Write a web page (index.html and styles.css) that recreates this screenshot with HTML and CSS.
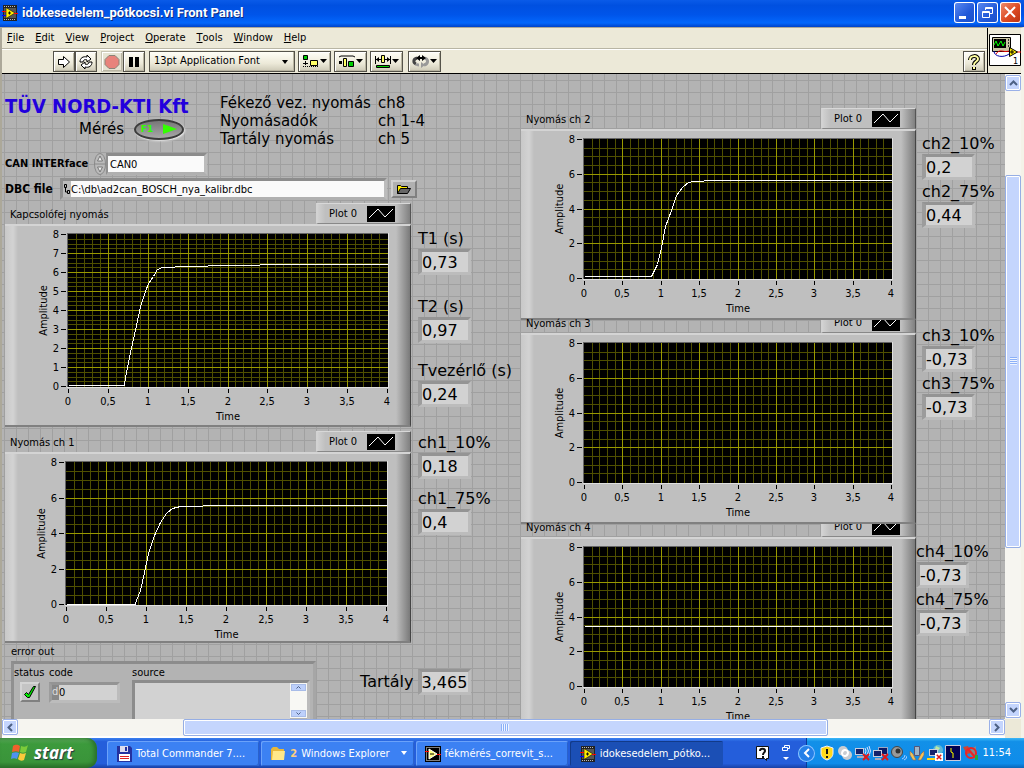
FILE: index.html
```
<!DOCTYPE html>
<html lang="hu">
<head>
  <meta charset="UTF-8">
  <title>idokesedelem_pótkocsi.vi Front Panel</title>
  <link rel="stylesheet" href="styles.css">
</head>
<body>
  <!-- shared icons -->
  <svg class="defs" width="0" height="0">
    <symbol id="vi" viewBox="0 0 16 16">
      <path fill="#222" d="M1 0h14v16H1z"/>
      <path stroke="#bbb" stroke-dasharray="1 1" d="M2 1.500h12M2 14.500h12"/>
      <path fill="#555" d="M2 3h12v10H2z"/>
      <path fill="#ffec00" stroke="#111" stroke-width=".6" d="M4 2.500l9 5.500-9 5.500z"/>
      <path stroke="#111" d="M6 8h3M7.500 6.500v3"/>
      <path stroke="#f00" d="M0 6.500h4M12 8.500h4"/>
      <path stroke="#00f" d="M0 10.500h4"/>
    </symbol>
    <symbol id="down" viewBox="0 0 8 5"><path d="M1 0h6L4 4z"/></symbol>
    <symbol id="wave" viewBox="0 0 28 16">
      <path fill="#000" d="M0 0h28v16H0z"/>
      <path fill="none" stroke="#fff" d="M2 12l9-9 7 8 8-8"/>
    </symbol>
    <symbol id="pc" viewBox="0 0 16 16">
      <path fill="#9aa6c4" d="M5 2h10v8H5z"/><path fill="#0a1a66" d="M6 3h8v6H6z"/>
      <path fill="#c9cfdd" d="M0 5h9v7H0z"/><path fill="#14226b" d="M1 6h7v5H1z"/>
      <path fill="#aab" d="M2 13h6v2H2z"/>
    </symbol>
    <symbol id="cross" viewBox="0 0 8 8"><path stroke="#e01818" stroke-width="2" d="M1 1l6 6M7 1L1 7"/></symbol>
  </svg>

  <header class="titlebar">
    <svg class="icon16"><use href="#vi"/></svg>
    <h1>idokesedelem_pótkocsi.vi Front Panel</h1>
    <button class="winbtn" aria-label="Minimize"><svg width="21" height="21"><path fill="#fff" d="M5 14h7v3H5z"/></svg></button>
    <button class="winbtn" aria-label="Restore"><svg width="21" height="21"><path fill="none" stroke="#fff" d="M8.500 8V5.500h7v6H13M5.500 9.500h7v6h-7zM8 6.500h7M5 10.500h7"/></svg></button>
    <button class="winbtn close" aria-label="Close"><svg width="21" height="21"><path stroke="#fff" stroke-width="2" d="M5 5l10 10M15 5L5 15"/></svg></button>
  </header>

  <main class="window">
    <div class="bars">
      <div class="bars-left">
        <nav class="menu">
          <button><u>F</u>ile</button>
          <button><u>E</u>dit</button>
          <button><u>V</u>iew</button>
          <button><u>P</u>roject</button>
          <button><u>O</u>perate</button>
          <button><u>T</u>ools</button>
          <button><u>W</u>indow</button>
          <button><u>H</u>elp</button>
        </nav>
        <div class="toolbar">
          <div class="group">
            <button class="tool" aria-label="Run"><svg width="18" height="16"><path fill="#fff" stroke="#000" d="M3.500 5.500h5V2.500l6 5.500-6 5.500v-3h-5z"/></svg></button>
            <button class="tool" aria-label="Run continuously"><svg width="18" height="16"><path fill="#fff" stroke="#000" d="M3 8c0-4 3-6 7-5V1l4 4-4 3V6C8 5 6 6 6 8zM15 8c0 4-3 6-7 5v2l-4-4 4-3v2c2 1 4 0 4-2z"/></svg></button>
          </div>
          <div class="group">
            <button class="tool flat" aria-label="Abort"><svg width="18" height="16"><path fill="#e8837b" stroke="#8b8378" d="M6 1.500h6l4 4v5l-4 4H6l-4-4v-5z"/></svg></button>
            <button class="tool" aria-label="Pause"><svg width="18" height="16"><path d="M4 3h4v10H4zM10 3h4v10h-4z"/></svg></button>
          </div>
          <div class="fontbox">
            <select aria-label="Font"><option>13pt Application Font</option></select>
            <svg width="8" height="5"><use href="#down"/></svg>
          </div>
          <button class="tool wide" aria-label="Align"><svg width="30" height="16"><path fill="#0c0" stroke="#000" d="M3.500 1.500h4v4h-4z"/><path fill="#ffff66" stroke="#000" d="M10.500 6.500h7v5h-7z"/><path stroke="#000" d="M5.500 7v4M3 9.500h5"/><path stroke="#000" stroke-dasharray="1 1" d="M3 12.500h16"/><path d="M20 5h7l-3.500 4z"/></svg></button>
          <button class="tool wide" aria-label="Distribute"><svg width="30" height="16"><path fill="none" stroke="#000" d="M3 3l2-1h12l2 1"/><path d="M3 7h3v3H3z"/><path fill="#ffff66" stroke="#000" d="M7.500 4.500h3v8h-3z"/><path fill="#0c0" stroke="#000" d="M12.500 7.500h5v5h-5z"/><path d="M20 5h7l-3.500 4z"/></svg></button>
          <button class="tool wide" aria-label="Resize"><svg width="30" height="16"><path stroke="#000" d="M3.500 2v8M18.500 2v8M4 5.500h5M13 5.500h5"/><path d="M7 3v5L4 5.500zM15 3v5l3-2.500z"/><path fill="#ffff66" stroke="#000" d="M9.500 1.500h3v7h-3z"/><path fill="#0c0" stroke="#000" d="M4.500 11.500h13v2h-13z"/><path d="M20 5h7l-3.500 4z"/></svg></button>
          <button class="tool wide last" aria-label="Reorder"><svg width="30" height="16"><path fill="none" stroke="#444" stroke-width="3" d="M7 4C3 5 3 9 6 10"/><path fill="none" stroke="#999" stroke-width="3" d="M15 4c4 2 3 6-1 7M6 10c1 1 2 1 3 1"/><path d="M6 4l4-3v2h2V1l4 3-4 3V5h-2v2z"/><path fill="#999" d="M15 11l-4-3v6z"/><path d="M20 5h7l-3.500 4z"/></svg></button>
          <button class="tool help" aria-label="Context help"><svg width="18" height="18"><path fill="none" stroke="#000" stroke-width="4" d="M5 7c0-5 8-5 8-1 0 3-4 2-4 6M9 14v3"/><path fill="none" stroke="#ffffa0" stroke-width="2" d="M5 7c0-5 8-5 8-1 0 3-4 2-4 6M9 14v2"/></svg></button>
        </div>
      </div>
      <div class="vi-icon">
        <svg width="32" height="32" viewBox="0 0 32 32">
          <path fill="#fff" stroke="#000" d="M.5.5h31v31H.5z"/>
          <path fill="#c9c5a4" stroke="#000" d="M3.500 3.500h18v14h-18z"/>
          <path fill="#000" d="M5 5h12v9H5z"/>
          <path fill="none" stroke="#0f0" d="M5 11l2-4 2 5 3-5 2 5 2-4"/>
          <path stroke="#333" stroke-dasharray="2 1" d="M19.500 5v9"/>
          <path fill="none" stroke="#00a" d="M5 17c0 6 10 7 15 3"/>
          <path fill="none" stroke="#e00" d="M7 20c4-6 7-1 13-3M28 18h4"/>
          <path fill="#ffec00" stroke="#000" d="M20.500 13.500l8 4.500-8 4.500z"/>
          <path stroke="#000" d="M21 18h4M23 16v4"/>
          <text x="24" y="30">1</text>
        </svg>
      </div>
    </div>

    <div class="work">
      <div class="panel">
        <section class="left">
          <div class="intro">
            <div class="brand">
              <h2>TÜV NORD-KTI Kft</h2>
              <div class="measure">
                <span>Mérés</span>
                <button class="runbtn" aria-label="Mérés F1"><b>F1</b><svg width="14" height="10"><path fill="#3f0" d="M0 0l14 5-14 5z"/></svg></button>
              </div>
            </div>
            <div class="channels">
              <span>Fékező vez. nyomás</span><span>ch8</span>
              <span>Nyomásadók</span><span>ch 1-4</span>
              <span>Tartály nyomás</span><span>ch 5</span>
            </div>
          </div>
          <div class="field">
            <label class="can-label" for="can">CAN INTERface</label>
            <svg class="spinner" width="12" height="22"><ellipse cx="6" cy="11" rx="5.500" ry="10.500" fill="#bbb" stroke="#888"/><path fill="#eee" stroke="#777" d="M3.500 8L6 3l2.500 5zM3.500 14L6 19l2.500-5z"/><path stroke="#888" d="M1 11h10"/></svg>
            <input class="can" id="can" value="CAN0">
          </div>
          <div class="field dbc">
            <label class="dbc-label" for="dbc">DBC file</label>
            <div class="path">
              <svg width="8" height="12"><path fill="none" stroke="#000" d="M1.500 1.500h2v3h-2zM2.500 5v4h2M4.500 7.500h2v3h-2z"/></svg>
              <input id="dbc" value="C:\db\ad2can_BOSCH_nya_kalibr.dbc">
            </div>
            <button class="browse" aria-label="Browse"><svg width="16" height="12"><path fill="#ffec00" stroke="#000" d="M1.500 10.500v-8h3l1 1h6v2"/><path fill="#666" stroke="#000" d="M1.500 10.500l3-5h10l-3 5z"/></svg></button>
          </div>

          <div class="results">
            <div class="charts">
              <article class="chart">
                <div class="chart-head"><h3>Kapcsolófej nyomás</h3><div class="legend">Plot 0<svg><use href="#wave"/></svg></div></div>
                <div class="frame" data-chart="kapcsolofej"></div>
              </article>
              <article class="chart spaced">
                <div class="chart-head"><h3>Nyomás ch 1</h3><div class="legend">Plot 0<svg><use href="#wave"/></svg></div></div>
                <div class="frame" data-chart="ch1"></div>
              </article>
            </div>
            <div class="readings">
              <div class="reading"><label for="t1">T1 (s)</label><input id="t1" value="0,73" readonly></div>
              <div class="reading far"><label for="t2">T2 (s)</label><input id="t2" value="0,97" readonly></div>
              <div class="reading mid"><label for="tv">Tvezérlő (s)</label><input id="tv" value="0,24" readonly></div>
              <div class="reading farther"><label for="c110">ch1_10%</label><input id="c110" value="0,18" readonly></div>
              <div class="reading near"><label for="c175">ch1_75%</label><input id="c175" value="0,4" readonly></div>
            </div>
          </div>

          <div class="bottom">
            <div class="error">
              <h3>error out</h3>
              <div class="cluster">
                <div class="status"><span>status</span><div class="led"><svg width="14" height="14"><path fill="#0e0" stroke="#000" d="M1.500 9.500l2-2 2 2 5-8h2l-6 11h-2z"/></svg></div></div>
                <div class="code"><label for="code">code</label><div class="codebox"><i>d</i><input id="code" value="0" readonly></div></div>
                <div class="source"><label for="source">source</label>
                  <div class="sourcebox"><textarea id="source" readonly></textarea>
                    <div class="minibar">
                      <button aria-label="Up"><svg width="5" height="3"><path fill="none" stroke="#4d6185" d="M.5 2.500l2-2 2 2"/></svg></button>
                      <button aria-label="Down"><svg width="5" height="3"><path fill="none" stroke="#4d6185" d="M.5.5l2 2 2-2"/></svg></button>
                    </div>
                  </div>
                </div>
              </div>
            </div>
            <div class="tank"><label for="tank">Tartály</label><input id="tank" value="3,465" readonly></div>
          </div>
        </section>

        <section class="right">
          <div class="charts">
            <article class="chart">
              <div class="chart-head"><h3>Nyomás ch 2</h3><div class="legend">Plot 0<svg><use href="#wave"/></svg></div></div>
              <div class="frame" data-chart="ch2"></div>
            </article>
            <article class="chart tight">
              <div class="chart-head"><h3>Nyomás ch 3</h3><div class="legend">Plot 0<svg><use href="#wave"/></svg></div></div>
              <div class="frame" data-chart="ch3"></div>
            </article>
            <article class="chart tight">
              <div class="chart-head"><h3>Nyomás ch 4</h3><div class="legend">Plot 0<svg><use href="#wave"/></svg></div></div>
              <div class="frame" data-chart="ch4"></div>
            </article>
          </div>
          <div class="channel-readings">
            <div class="pair">
              <div class="reading"><label for="c210">ch2_10%</label><input id="c210" value="0,2" readonly></div>
              <div class="reading"><label for="c275">ch2_75%</label><input id="c275" value="0,44" readonly></div>
            </div>
            <div class="pair">
              <div class="reading"><label for="c310">ch3_10%</label><input id="c310" value="-0,73" readonly></div>
              <div class="reading"><label for="c375">ch3_75%</label><input id="c375" value="-0,73" readonly></div>
            </div>
            <div class="pair flush">
              <div class="reading"><label for="c410">ch4_10%</label><input id="c410" value="-0,73" readonly></div>
              <div class="reading"><label for="c475">ch4_75%</label><input id="c475" value="-0,73" readonly></div>
            </div>
          </div>
        </section>
      </div>
      <div class="scroll vertical">
        <button class="arrow" aria-label="Scroll up"><svg width="9" height="6"><path d="M1 5l3.500-3.500L8 5"/></svg></button>
        <div class="space before"></div>
        <div class="thumb"><span></span></div>
        <div class="space after"></div>
        <button class="arrow" aria-label="Scroll down"><svg width="9" height="6"><path d="M1 1l3.500 3.500L8 1"/></svg></button>
      </div>
      <div class="scroll horizontal">
        <button class="arrow" aria-label="Scroll left"><svg width="6" height="9"><path d="M5 1L1.500 4.500 5 8"/></svg></button>
        <div class="space before"></div>
        <div class="thumb"><span></span></div>
        <div class="space after"></div>
        <button class="arrow" aria-label="Scroll right"><svg width="6" height="9"><path d="M1 1l3.500 3.500L1 8"/></svg></button>
      </div>
      <div class="corner"></div>
    </div>
  </main>

  <footer class="taskbar">
    <button class="start">
      <svg width="20" height="20"><path fill="#f0602c" d="M3 3c3-2 5-1 7 0L9 9C7 8 5 8 2 9z"/><path fill="#7ccb3a" d="M11 3c3 1 5 1 7-1l-2 7c-2 1-4 1-6 0z"/><path fill="#4f92f0" d="M2 10c3-1 5-1 7 0l-2 6c-2-1-4-1-6 0z"/><path fill="#fbca3b" d="M10 10c2 1 4 1 6 0l-2 7c-2 1-4 1-6-1z"/></svg>
      start
    </button>
    <div class="tasks">
      <button class="task"><svg class="icon16" viewBox="0 0 16 16"><path fill="#2432a0" d="M1 0h13l2 2v14H1z"/><path fill="#dde" d="M4 0h8v6H4z"/><path fill="#2432a0" d="M9 1h2v4H9z"/><path fill="#fff" d="M3 8h11v7H3z"/><path stroke="#e02020" d="M4 10.500h9M4 12.500h9"/></svg><span>Total Commander 7....</span></button>
      <button class="task"><svg class="icon16" viewBox="0 0 16 16"><path fill="#e8b73a" d="M1 3l2-2h4l2 2h5v11H1z"/><path fill="#ffe88a" d="M3 5h12l-1 9H2z"/></svg><b>2</b><span>Windows Explorer</span><svg class="more" width="8" height="5"><use href="#down"/></svg></button>
      <button class="task"><svg class="icon16" viewBox="0 0 16 16"><path fill="#000" d="M0 0h16v16H0z"/><path fill="none" stroke="#fff" stroke-dasharray="1 1" d="M1.500 1.500h13v13h-13z"/><path fill="#ffff80" stroke="#fff" d="M4 3l8 5-8 5z"/><path stroke="#000" d="M5 8h4"/><path stroke="#f00" d="M0 5.500h4M12 8.500h4"/></svg><span>fékmérés_correvit_s...</span></button>
      <button class="task active"><svg class="icon16"><use href="#vi"/></svg><span>idokesedelem_pótko...</span></button>
    </div>
    <div class="lang">
      <svg width="14" height="15"><path fill="#fff" stroke="#111" d="M.5.5h12v12h-2v2l-2-2h-8z"/><path fill="none" stroke="#111" stroke-width="2" d="M4 5c0-3 5-3 5 0 0 2-2 1-2 4M7 10v2"/></svg>
      <svg width="8" height="18"><path fill="none" stroke="#fff" d="M2.500 3V1.500h5v3H6M.5 3.500h5v3h-5z"/><path fill="#fff" d="M1 13h6l-3 3z"/></svg>
    </div>
    <div class="tray">
      <button class="expand" aria-label="Show hidden icons"><svg width="8" height="10"><path fill="none" stroke="#fff" stroke-width="2" d="M6 1L2 5l4 4"/></svg></button>
      <svg class="icon16" viewBox="0 0 16 16"><path fill="#ffd91a" stroke="#eef" d="M8 1l6 2v5c0 4-3 6-6 7-3-1-6-3-6-7V3z"/><path stroke="#111" stroke-width="2" d="M8 4v5M8 11v2"/></svg>
      <svg class="icon16" viewBox="0 0 16 16"><circle cx="6" cy="6" r="5" fill="#c8ccd2"/><circle cx="10" cy="10" r="5" fill="#c8ccd2"/><path fill="none" stroke="#fff" stroke-width="2" d="M5 9c0-5 5-5 6-2M11 7c0 5-5 5-6 2"/></svg>
      <svg class="icon16" viewBox="0 0 16 16"><path fill="#c9cfdd" d="M0 3h9v7H0z"/><path fill="#14226b" d="M1 4h7v5H1z"/><path fill="#aab" d="M2 11h7v2H2z"/><path fill="none" stroke="#d0e0ff" d="M10 3q2 3 0 6M12 2q3 4 0 8M14 1q3 5 0 10"/><use href="#cross" x="7" y="8" width="8" height="8"/></svg>
      <svg class="icon16" viewBox="0 0 16 16"><use href="#pc" width="16" height="16"/><use href="#cross" x="8" y="8" width="8" height="8"/></svg>
      <svg class="icon16" viewBox="0 0 16 16"><circle cx="6" cy="7" r="5.500" fill="#9a9a9a" stroke="#444"/><circle cx="7" cy="6" r="2.500" fill="#333"/><path fill="none" stroke="#acf" d="M11 14q3-1 3-4M13 15q3-1 3-4"/></svg>
      <svg class="icon16" viewBox="0 0 16 16"><path fill="#9fb4c6" stroke="#557" d="M5.500 1.500h5v9h-5z"/><path fill="#f3c257" stroke="#865" stroke-width=".6" d="M1 6l3 3 3 6H4L1 10zM15 6l-3 3-3 6h3l3-5z"/></svg>
      <svg class="icon16" viewBox="0 0 16 16"><circle cx="11" cy="5" r="5" fill="#5fb8d8"/><path fill="#bbe8a0" d="M9 1l4 2-2 3-3-2z"/><path fill="#c9cfdd" d="M2 4h9v7H2z"/><path fill="#14226b" d="M3 5h7v5H3z"/><path fill="#ffd91a" d="M0 13h10v2H0z"/><path fill="#fff" d="M8 8h8v8H8z"/><use href="#cross" x="9" y="9" width="6" height="6"/></svg>
      <svg class="icon16" viewBox="0 0 16 16"><path fill="#020250" stroke="#ccd" d="M.5.5h15v15H.5z"/><path stroke="#ff0" d="M6 3v4l2 1v5"/></svg>
      <svg class="icon16" viewBox="0 0 16 16"><path fill="#c43" d="M0 2l5-1 3 7-4 1z"/><path fill="#888" d="M7 5l6-4v13l-6-4z"/><circle cx="8" cy="8" r="5" fill="none" stroke="#e22" stroke-width="2"/><path stroke="#e22" stroke-width="2" d="M5 4l7 8"/><path fill="#2a4" d="M12 10h3v5h-3z"/></svg>
      <time>11:54</time>
    </div>
  </footer>
  <script src="charts.js"></script>
</body>
</html>
```
FILE: styles.css
```
* { box-sizing: border-box; }
body {
  margin: 0;
  height: 100vh;
  display: flex;
  flex-direction: column;
  overflow: hidden;
  font: 11px/14px "DejaVu Sans Condensed", "DejaVu Sans", sans-serif;
  color: #000;
}
button, input, select, textarea { font: inherit; color: inherit; margin: 0; padding: 0; border: 0; border-radius: 0; }
button { display: flex; align-items: center; justify-content: center; background: none; }
h1, h2, h3 { margin: 0; font: inherit; }
svg { display: block; flex: none; }
.defs { position: absolute; }
.icon16 { width: 16px; height: 16px; }

/* Title bar */
.titlebar {
  flex: none;
  display: flex;
  align-items: center;
  gap: 2px;
  height: 27px;
  padding: 0 3px 2px 2px;
  background: linear-gradient(#0a5be8, #0050e0 20%, #0055ea 55%, #0367fc 85%, #0042c8);
  color: #fff;
}
.titlebar h1 { flex: 1; margin-left: 2px; font: bold 13px/18px Roboto, sans-serif; text-shadow: 1px 1px #0a2a80; }
.winbtn { width: 21px; height: 21px; border-radius: 3px; box-shadow: inset 0 0 0 1px #fff; background: linear-gradient(135deg, #5e8cf2, #2158d8 60%, #1a4fc8); }
.winbtn.close { background: linear-gradient(135deg, #f09070, #dc4a22 55%, #b83010); }

/* Menu and toolbar */
.window { flex: 1; min-height: 0; display: flex; flex-direction: column; border-left: 2px solid #aca899; border-right: 3px solid #f4f2e8; border-top: 1px solid #aca899; }
.bars { flex: none; display: flex; height: 46px; background: #ece9d8; border-bottom: 1px solid #000; }
.bars-left { flex: 1; }
.menu { display: flex; gap: 11px; height: 20px; padding-left: 5px; }
.toolbar { display: flex; align-items: center; gap: 3px; height: 25px; padding: 1px 2px 0 51px; border-top: 1px solid #b8b5a4; box-shadow: inset 0 1px #fff; }
.group { display: flex; }
.group + .group { margin-left: 1px; }
.tool { width: 22px; height: 21px; border: 1px solid #55534a; background: linear-gradient(#fffef6, #ece9d8 60%, #cdc9b6); box-shadow: inset 1px 1px #fff, inset -1px -1px #b9b5a2; }
.tool.flat { border-color: #c8c5b4; background: #e6e3d2; }
.tool.wide { width: 33px; }
.tool.last { margin-left: 2px; }
.tool.help { margin-left: auto; }
.fontbox { position: relative; width: 146px; margin-left: 1px; }
.fontbox select { display: block; width: 100%; height: 21px; padding: 0 4px 2px; appearance: none; border: 1px solid #55534a; background: linear-gradient(#fffef6, #ece9d8 60%, #cdc9b6); box-shadow: inset -1px -1px #b9b5a2; }
.fontbox svg { position: absolute; right: 6px; top: 9px; }
.vi-icon { width: 34px; border-left: 1px solid #000; padding: 6px 0 0 1px; }
.vi-icon text { font-size: 9px; }

/* Front panel */
.work { flex: 1; min-height: 0; display: grid; grid-template: minmax(0, 1fr) 19px / minmax(0, 1fr) 16px; }
.panel {
  display: flex;
  overflow: hidden;
  background: repeating-linear-gradient(90deg, transparent 0 2px, #a0a0a0 2px 3px, transparent 3px 12px),
    repeating-linear-gradient(#b3b3b3 0 6px, #a0a0a0 6px 7px, #b3b3b3 7px 12px);
}
.left { flex: none; width: 519px; padding-top: 20px; }
.right { flex: none; display: flex; gap: 6px; }
.intro { display: flex; height: 59px; padding-left: 3px; }
.brand { width: 215px; }
.brand h2 { color: #20d; font-size: 20px; font-weight: bold; line-height: 24px; white-space: nowrap; }
.measure { display: flex; align-items: center; gap: 10px; height: 22px; padding-left: 74px; font: 15px/18px "DejaVu Sans", sans-serif; }
.runbtn { gap: 10px; width: 50px; height: 21px; border: 2px solid #3c3c3c; border-radius: 50%; background: linear-gradient(#777, #a8a8a8); color: #3f0; font-size: 9px; box-shadow: 1px 1px 2px #eee; }
.channels { display: grid; grid-template-columns: 158px auto; align-content: start; font: 15px/18px "DejaVu Sans", sans-serif; }

.field { display: flex; align-items: center; height: 22px; }
.field label { font-weight: bold; padding-left: 3px; }
.can-label { width: 92px; white-space: nowrap; }
.can { width: 101px; height: 22px; padding: 0 2px; background: #fafafa; border: solid; border-width: 3px 3px 3px 2px; border-color: #8c8c8c #bcbcbc #b0b0b0 #909090; }
.dbc { margin: 3px 0; }
.dbc-label { width: 58px; font-size: 12px; }
.path { display: flex; align-items: center; width: 327px; height: 22px; background: #bcbcbc; border: 3px solid; border-color: #8c8c8c #bcbcbc #b0b0b0 #909090; }
.path input { flex: 1; height: 16px; background: #fafafa; }
.browse { width: 26px; height: 18px; margin-left: 4px; background: #b0b0b0; border: 2px solid; border-color: #d0d0d0 #808080 #808080 #d0d0d0; }

/* Graphs */
.results { display: flex; gap: 7px; }
.results .charts { padding-left: 3px; }
.right .charts { padding-top: 34px; }
.spaced { margin-top: 4px; }
.chart-head { display: flex; justify-content: space-between; align-items: flex-end; height: 21px; }
.chart-head h3 { padding: 0 0 2px 5px; }
.tight .chart-head { height: 13px; }
.legend { display: flex; align-items: center; gap: 10px; height: 21px; width: 95px; padding-left: 11px; border: solid; border-width: 1px 1px 1px 2px; border-color: #d8d8d8 #555 #888 #d2d2d2; background: linear-gradient(90deg, #d0d0d0, #bfbfbf 8%, #bfbfbf 85%, #808080); white-space: nowrap; }
/* the graph above covers the top of the legend */
.tight .legend { clip-path: inset(8px 0 0 0); }
.legend svg { width: 28px; height: 16px; }
.frame { border-top: 2px solid #d4d4d4; border-bottom: 2px solid #808080; border-right: 1px solid #444; background: linear-gradient(90deg, #c8c8c8, #d3d3d3 8px, #bfbfbf 13px, #bfbfbf calc(100% - 14px), #7a7a7a); }
.frame text { font-size: 11px; }
.minor { fill: #4f4f00; }
.major { fill: #999900; }
.trace { fill: none; stroke: #fff; }

/* Indicators */
.readings { padding-top: 26px; }
.reading.far { margin-top: 22px; }
.reading.mid { margin-top: 18px; }
.reading.farther { margin-top: 26px; }
.reading.near { margin-top: 10px; }
.reading label, .tank label { display: block; font: 16px/20px "DejaVu Sans", sans-serif; white-space: nowrap; }
.reading input, .tank input {
  display: block;
  width: 53px;
  height: 26px;
  font: 16px/20px "DejaVu Sans", sans-serif;
  background: #d2d2d2;
  border: solid;
  border-width: 3px 3px 3px 4px;
  border-color: #949494 #bcbcbc #bcbcbc #9c9c9c;
}
.channel-readings { display: flex; flex-direction: column; padding-top: 60px; }
.pair { flex: none; display: flex; flex-direction: column; gap: 2px; height: 192px; }
.pair + .pair { height: 216px; }
.pair.flush { margin-left: -6px; }

.bottom { display: flex; padding-top: 2px; }
.error { padding-left: 9px; }
.error h3 { margin-bottom: 2px; }
.cluster { display: flex; width: 305px; height: 90px; padding-top: 2px; background: #b3b3b3; border: 3px solid; border-color: #8c8c8c #a6a6a6 #8c8c8c #909090; }
.status { width: 35px; white-space: nowrap; }
.led { display: flex; align-items: center; justify-content: center; width: 20px; height: 20px; margin: 2px 0 0 6px; background: #c4c4c4; border: 2px solid; border-color: #d4d4d4 #808080 #808080 #d4d4d4; }
.code { width: 83px; }
.codebox { display: flex; width: 71px; height: 21px; margin-top: 2px; border: 3px solid; border-color: #949494 #bcbcbc #bcbcbc #9c9c9c; }
.codebox i { width: 7px; background: #888; color: #ddd; font-style: normal; }
.codebox input { flex: 1; min-width: 0; background: #d2d2d2; }
.source { flex: 1; }
.sourcebox { display: flex; height: 70px; margin-right: 3px; border: 3px solid; border-color: #8c8c8c #bcbcbc #bcbcbc #8c8c8c; }
.sourcebox textarea { flex: 1; min-width: 0; resize: none; background: #d2d2d2; }
.minibar { display: flex; flex-direction: column; justify-content: space-between; width: 17px; height: 35px; padding: 1px; background: #f8f8f4; }
.minibar button { height: 7px; background: #bdd0fb; border: 1px solid #a8bce8; }
.tank { display: flex; align-items: center; align-self: flex-start; gap: 4px; margin: 24px 0 0 44px; }

/* Scroll bars */
.scroll { display: flex; background: #f6f5f0; }
.vertical { flex-direction: column; padding: 1px 0; }
.horizontal { height: 17px; }
.arrow { flex: none; width: 16px; height: 16px; border: 1px solid #9ab0e8; border-radius: 2px; background: #c4d5fd; box-shadow: inset 0 0 0 1px #fff; }
.arrow path { fill: none; stroke: #4d6185; stroke-width: 2; }
.thumb { display: flex; align-items: center; justify-content: center; border: 1px solid #96aee4; border-radius: 2px; background: #c4d5fd; box-shadow: inset 0 0 0 1px #fff; }
.vertical .thumb { flex: 372; }
.vertical .before { flex: 84; }
.vertical .after { flex: 155; }
.horizontal .thumb { flex: 645; }
.horizontal .before { flex: 165; }
.horizontal .after { flex: 161; }
.vertical .thumb span { width: 7px; height: 8px; background: repeating-linear-gradient(#8cb0f8 0 1px, #eef4ff 1px 2px); }
.horizontal .thumb span { width: 8px; height: 7px; background: repeating-linear-gradient(90deg, #8cb0f8 0 1px, #eef4ff 1px 2px); }
.corner { background: #ece9d8; }

/* Taskbar */
.taskbar { flex: none; display: flex; height: 30px; background: linear-gradient(#3a80f0, #245edb 12%, #245edb 85%, #1941a5); color: #fff; }
.start { width: 97px; gap: 4px; padding-right: 14px; border-radius: 0 10px 10px 0; background: linear-gradient(#5aa85a, #3c9a3c 20%, #3a943a 80%, #2a702a); box-shadow: inset -3px 0 4px #2a702a; font: italic bold 17px/20px "Open Sans", sans-serif; text-shadow: 1px 1px 1px #234; }
.tasks { flex: 1; display: flex; gap: 2px; padding: 3px 33px 2px 10px; }
.task { flex: 1; min-width: 0; justify-content: flex-start; gap: 4px; padding: 0 6px 0 9px; border-radius: 2px; background: #3c81f3; box-shadow: inset 1px 1px #6ba2fa, inset -1px -1px #2a62cc; white-space: nowrap; }
.task b { color: #ffcf80; }
.task.active { padding-left: 10px; background: #1b4fb5; box-shadow: inset 1px 1px #123a88; }
.more { margin-left: auto; fill: #fff; }
.lang { display: flex; align-items: center; gap: 12px; width: 50px; }
.tray { display: flex; align-items: center; gap: 2px; width: 218px; padding-right: 13px; background: linear-gradient(#3cb8f8, #1290e8 12%, #0f8cea 85%, #0a66b8); border-left: 1px solid #0a3a9a; }
.expand { flex: none; width: 17px; height: 17px; margin: 0 2px 0 -9px; border-radius: 50%; background: #2480e8; box-shadow: inset 0 0 0 1px #8cc4ff; }
.tray time { margin-left: auto; }
```
FILE: charts.js
```
// Waveform graphs: sizes of the frame and plot in px, traces as [time, amplitude]
const big = { w: 405, h: 199, x: 63, y: 8, pw: 320, ph: 153, step: 1, minor: 0.25 };
const low = { w: 405, h: 187, x: 61, y: 8, pw: 321, ph: 143, step: 2, minor: 0.5 };
const side = { w: 394, h: 187, x: 63, y: 8, pw: 308, ph: 140, step: 2, minor: 0.5 };

const charts = {
  kapcsolofej: { ...big, points: [[0, 0.05], [0.7, 0.05], [0.72, 0.5], [0.78, 1.8], [0.85, 3.2], [0.9, 4.2], [0.96, 5], [1, 5.4], [1.06, 5.8], [1.12, 6.15], [1.18, 6.25], [1.5, 6.3], [2, 6.35], [2.8, 6.4], [4, 6.42]] },
  ch1: { ...low, points: [[0, 0.02], [0.86, 0.02], [0.88, 0.2], [0.93, 0.8], [0.98, 1.8], [1.03, 2.9], [1.1, 3.9], [1.18, 4.6], [1.25, 5.1], [1.33, 5.4], [1.42, 5.52], [2, 5.56], [4, 5.58]] },
  ch2: { ...side, points: [[0, 0.1], [0.87, 0.1], [0.95, 0.8], [1, 1.8], [1.06, 3], [1.13, 3.9], [1.2, 4.8], [1.28, 5.25], [1.35, 5.5], [1.42, 5.6], [1.7, 5.65], [4, 5.65]] },
  ch3: { ...side, points: [] },
  ch4: { ...side, points: [[0, 3.45], [4, 3.45]] }
};

function drawChart(c) {
  const px = t => Math.round(c.x + t / 4 * (c.pw - 1));
  const py = v => Math.round(c.y + c.ph - 1 - v / 8 * (c.ph - 1));
  let s = `<svg width="${c.w}" height="${c.h}" shape-rendering="crispEdges">`;
  s += `<rect x="${c.x - 1}" y="${c.y - 1}" width="${c.pw + 2}" height="${c.ph + 2}" fill="#e0e0e0"/>`;
  s += `<rect x="${c.x - 1}" y="${c.y - 1}" width="${c.pw + 1}" height="${c.ph + 1}" fill="#666"/>`;
  s += `<rect x="${c.x}" y="${c.y}" width="${c.pw}" height="${c.ph}"/>`;

  const vline = (t, cls) => `<rect class="${cls}" x="${px(t)}" y="${c.y}" width="1" height="${c.ph}"/>`;
  const hline = (v, cls) => `<rect class="${cls}" x="${c.x}" y="${py(v)}" width="${c.pw}" height="1"/>`;
  for (let i = 1; i < 40; i++) s += vline(i / 10, 'minor');
  for (let v = c.minor; v < 8; v += c.minor) s += hline(v, 'minor');
  for (let i = 1; i < 8; i++) s += vline(i / 2, 'major');
  for (let v = c.step; v < 8; v += c.step) s += hline(v, 'major');

  for (let i = 0; i <= 8; i++) {
    const x = px(i / 2);
    s += `<rect x="${x}" y="${c.y + c.ph + 2}" width="1" height="4"/>`;
    s += `<text x="${x}" y="${c.y + c.ph + 18}" text-anchor="middle">${String(i / 2).replace('.', ',')}</text>`;
  }
  for (let v = 0; v <= 8; v += c.step) {
    s += `<rect x="${c.x - 7}" y="${py(v)}" width="5" height="1"/>`;
    s += `<text x="${c.x - 9}" y="${py(v) + 4}" text-anchor="end">${v}</text>`;
  }
  const mid = c.y + c.ph / 2;
  s += `<text x="${c.x + c.pw / 2}" y="${c.y + c.ph + 33}" text-anchor="middle">Time</text>`;
  s += `<text transform="translate(${c.x - 21} ${mid}) rotate(-90)" text-anchor="middle">Amplitude</text>`;
  const pts = c.points.map(p => `${px(p[0]) + 0.5},${py(p[1]) + 0.5}`).join(' ');
  s += `<polyline class="trace" points="${pts}"/></svg>`;
  return s;
}

document.querySelectorAll('[data-chart]').forEach(el => {
  el.innerHTML = drawChart(charts[el.dataset.chart]);
});
```
